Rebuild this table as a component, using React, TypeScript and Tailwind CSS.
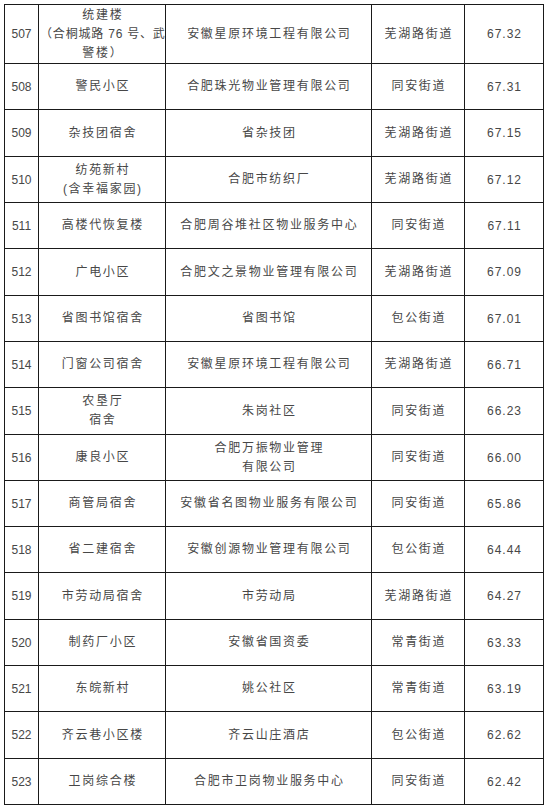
import React from 'react';

type Row = {
  no: string;
  name: string[];
  org: string[];
  street: string;
  score: string;
  h: string;
};

const rows: Row[] = [
  { no: '507', name: ['统建楼', '（合桐城路 76 号、武', '警楼）'], org: ['安徽星原环境工程有限公司'], street: '芜湖路街道', score: '67.32', h: 'h-[59px]' },
  { no: '508', name: ['警民小区'], org: ['合肥珠光物业管理有限公司'], street: '同安街道', score: '67.31', h: 'h-[46px]' },
  { no: '509', name: ['杂技团宿舍'], org: ['省杂技团'], street: '芜湖路街道', score: '67.15', h: 'h-[47px]' },
  { no: '510', name: ['纺苑新村', '(含幸福家园)'], org: ['合肥市纺织厂'], street: '芜湖路街道', score: '67.12', h: 'h-[46px]' },
  { no: '511', name: ['高楼代恢复楼'], org: ['合肥周谷堆社区物业服务中心'], street: '同安街道', score: '67.11', h: 'h-[46px]' },
  { no: '512', name: ['广电小区'], org: ['合肥文之景物业管理有限公司'], street: '芜湖路街道', score: '67.09', h: 'h-[47px]' },
  { no: '513', name: ['省图书馆宿舍'], org: ['省图书馆'], street: '包公街道', score: '67.01', h: 'h-[46px]' },
  { no: '514', name: ['门窗公司宿舍'], org: ['安徽星原环境工程有限公司'], street: '芜湖路街道', score: '66.71', h: 'h-[46px]' },
  { no: '515', name: ['农垦厅', '宿舍'], org: ['朱岗社区'], street: '同安街道', score: '66.23', h: 'h-[47px]' },
  { no: '516', name: ['康良小区'], org: ['合肥万振物业管理', '有限公司'], street: '同安街道', score: '66.00', h: 'h-[46px]' },
  { no: '517', name: ['商管局宿舍'], org: ['安徽省名图物业服务有限公司'], street: '同安街道', score: '65.86', h: 'h-[46px]' },
  { no: '518', name: ['省二建宿舍'], org: ['安徽创源物业管理有限公司'], street: '包公街道', score: '64.44', h: 'h-[46px]' },
  { no: '519', name: ['市劳动局宿舍'], org: ['市劳动局'], street: '芜湖路街道', score: '64.27', h: 'h-[47px]' },
  { no: '520', name: ['制药厂小区'], org: ['安徽省国资委'], street: '常青街道', score: '63.33', h: 'h-[46px]' },
  { no: '521', name: ['东皖新村'], org: ['姚公社区'], street: '常青街道', score: '63.19', h: 'h-[46px]' },
  { no: '522', name: ['齐云巷小区楼'], org: ['齐云山庄酒店'], street: '包公街道', score: '62.62', h: 'h-[47px]' },
  { no: '523', name: ['卫岗综合楼'], org: ['合肥市卫岗物业服务中心'], street: '同安街道', score: '62.42', h: 'h-[46px]' },
];

const cell = 'flex flex-col items-center justify-center border-r border-b border-[#1a1a1a] text-center whitespace-nowrap';

const Lines = ({ lines }: { lines: string[] }) => (
  <>
    {lines.map((l, i) => (
      <span
        key={i}
        className={`block leading-[19px] pl-[1.7px] ${l.includes('76') ? 'tracking-[0.8px]' : 'tracking-[1.7px]'}`}
      >
        {l}
      </span>
    ))}
  </>
);

export default function App() {
  return (
    <div className="min-h-[812px] w-[547px] bg-white pt-[4px] pl-[4px]">
      <div
        className="w-[540px] border-l border-t border-[#1a1a1a] text-[12px] text-[#474747]"
        style={{ fontFamily: '"Liberation Sans", "Noto Sans CJK SC", sans-serif' }}
      >
        {rows.map((r) => (
          <div key={r.no} className={`grid grid-cols-[34px_127px_206px_93px_79px] ${r.h}`}>
            <div className={cell}>{r.no}</div>
            <div className={cell}>
              <Lines lines={r.name} />
            </div>
            <div className={cell}>
              <Lines lines={r.org} />
            </div>
            <div className={cell}>
              <Lines lines={[r.street]} />
            </div>
            <div className={`${cell} tracking-[1px] pl-[1px]`}>{r.score}</div>
          </div>
        ))}
      </div>
    </div>
  );
}
